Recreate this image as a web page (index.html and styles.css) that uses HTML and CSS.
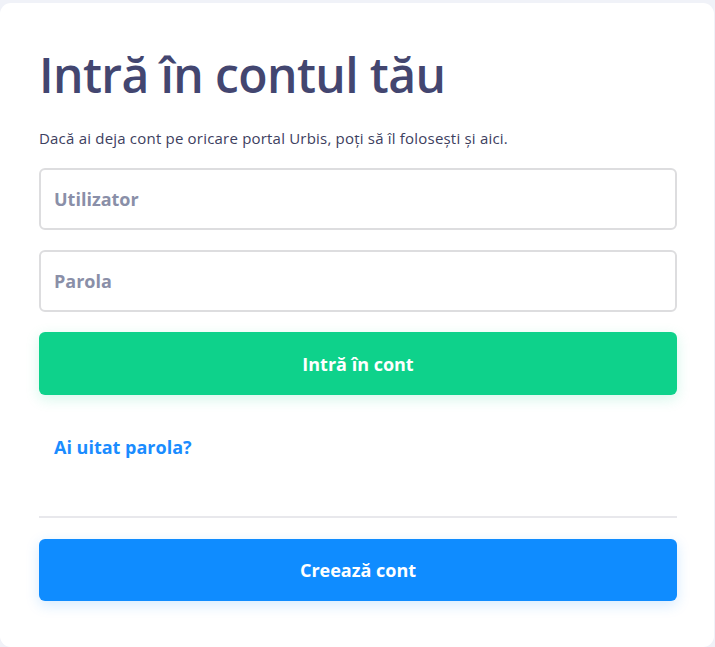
FILE: index.html
```html
<!DOCTYPE html>
<html lang="ro">
<head>
  <meta charset="UTF-8">
  <meta name="viewport" content="width=device-width, initial-scale=1.0">
  <title>Intră în contul tău</title>
  <link rel="stylesheet" href="styles.css">
</head>
<body>
  <div class="card">
    <h1>Intră în contul tău</h1>
    <p class="intro">Dacă ai deja cont pe oricare portal Urbis, poți să îl folosești și aici.</p>

    <form class="login-form" onsubmit="return false">
      <input type="text" id="username" placeholder="Utilizator">
      <input type="password" id="password" placeholder="Parola">
      <button type="submit" class="btn btn-green">Intră în cont</button>
    </form>

    <a href="#" class="forgot">Ai uitat parola?</a>

    <hr class="divider">

    <button type="button" class="btn btn-blue">Creează cont</button>
  </div>
</body>
</html>
```

FILE: styles.css
```css
body {
  margin: 0;
  padding: 3px 1px 0 0;
  background-color: #f0f2f8;
  font-family: "Open Sans", "Noto Sans", sans-serif;
}

.card {
  box-sizing: border-box;
  height: 644px;
  background: #fff;
  border-radius: 11px;
  padding: 31px 37px 0 39px;
}

h1 {
  margin: 0;
  font-size: 48px;
  font-weight: 600;
  letter-spacing: -0.6px;
  color: #434670;
  line-height: 82px;
}

.intro {
  margin: 12px 0 20px;
  font-size: 15px;
  letter-spacing: 0.2px;
  color: #3d4060;
}

.login-form {
  display: flex;
  flex-direction: column;
  gap: 20px;
}

input {
  box-sizing: border-box;
  height: 62px;
  padding: 0 13px;
  border: 2px solid #dddddf;
  border-radius: 6px;
  font-family: inherit;
  font-size: 18px;
  font-weight: 700;
  color: #434670;
}

input::placeholder {
  color: #8a8fa8;
}

.btn {
  display: block;
  width: 100%;
  height: 63px;
  border: none;
  border-radius: 6px;
  color: #fff;
  font-family: inherit;
  font-size: 18px;
  font-weight: 700;
  cursor: pointer;
}

.btn-green {
  background-color: #0ed28b;
  box-shadow: 0 4px 14px rgba(14, 210, 139, 0.18);
}

.btn-blue {
  height: 62px;
  background-color: #0f8cff;
  box-shadow: 0 4px 14px rgba(15, 140, 255, 0.18);
}

.forgot {
  display: inline-block;
  margin: 40px 0 0 15px;
  font-size: 18px;
  font-weight: 700;
  color: #1a8cff;
  text-decoration: none;
}

.divider {
  margin: 57px 0 21px;
  border: none;
  border-top: 2px solid #e8e8ec;
}
```
